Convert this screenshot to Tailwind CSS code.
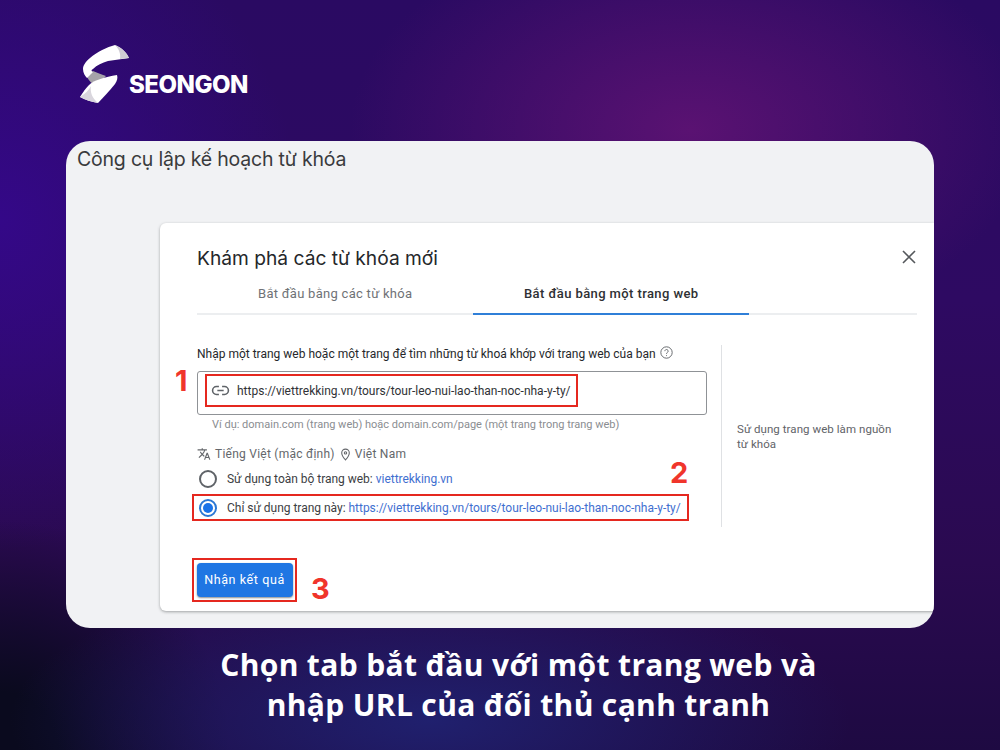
<!DOCTYPE html>
<html lang="vi">
<head>
  <meta charset="UTF-8">
  <title>Chọn tab bắt đầu với một trang web</title>
  <script src="https://cdn.jsdelivr.net/npm/@tailwindcss/browser@4"></script>
</head>
<body class="font-['Roboto',sans-serif]">
  <div class="relative w-[1000px] h-[750px] overflow-hidden flex flex-col bg-[radial-gradient(ellipse_340px_210px_at_690px_130px,#5a1272_0%,transparent_100%),radial-gradient(ellipse_420px_150px_at_430px_720px,#20206e_0%,transparent_100%),radial-gradient(ellipse_230px_230px_at_0px_750px,#0a0a1e_0%,#0a0a1e_25%,transparent_100%),radial-gradient(ellipse_300px_330px_at_0px_220px,#340888_0%,transparent_100%),linear-gradient(180deg,#2a0a62_0%,#2e0a62_40%,#2a0a50_75%,#1e0a42_100%)]">

    <!-- logo -->
    <div class="h-[141px] pl-[80px] pt-[45px] flex items-start shrink-0">
      <svg class="w-[50px] h-[60px] shrink-0" viewBox="80 45 50 60">
        <path d="M87 77 L93 71 C97 73 101 74 106 76 L96 86 C92 84 89 81 87 77Z" fill="#a5a2a9"/>
        <path d="M115 45 C107 47 97 52 90 58 C85 62 83 66 83 69 C83 73 85 76 87 78 L93 72 C91 71 91 70 93 69 C97 65 102 63 108 61 L129 58 C127 53 122 48 115 45Z" fill="#fff"/>
        <path d="M115 45 C122 48 127 53 129 58 L120 59 C121 54 119 49 115 45Z" fill="#cfccd4"/>
        <path d="M117 75 C118 78 117 81 115 84 C110 90 104 97 98 103 C92 102 85 100 80 97 C83 92 86 88 89 85 C94 80 105 77 117 75Z" fill="#fff"/>
        <path d="M98 103 C92 102 85 100 80 97 C85 94 89 90 91 86 C90 92 92 98 98 103Z" fill="#d9d6dd"/>
      </svg>
      <div class="mt-[25px] -ml-[1px] text-[24px] leading-[30px] font-extrabold text-white font-['Inter',sans-serif] tracking-[-0.5px]">SEONGON</div>
    </div>

    <!-- main card -->
    <div class="relative ml-[66px] w-[868px] h-[487px] shrink-0 rounded-[24px] bg-[#f1f2f4] overflow-hidden">
      <div class="pl-[11px] pt-[6px] text-[19.5px] leading-[25px] tracking-[-0.2px] text-[#3a3b3d] font-['Inter',sans-serif]">Công cụ lập kế hoạch từ khóa</div>

      <!-- dialog -->
      <div class="absolute left-[94px] top-[82px] w-[774px] h-[388px] bg-white rounded-l-[6px] shadow-[0_1px_3px_rgba(60,64,67,0.45)] pl-[37px] text-[#3c4043]">
        <div class="pt-[22px] flex items-center justify-between pr-[17px]">
          <div class="text-[19.2px] leading-[26px] text-[#25272a] font-['Inter',sans-serif]">Khám phá các từ khóa mới</div>
          <svg class="w-[16px] h-[16px] -mt-[3px]" viewBox="0 0 16 16" fill="none" stroke="#55585c" stroke-width="1.6"><path d="M2 2 L14 14 M14 2 L2 14"/></svg>
        </div>

        <!-- tabs -->
        <div class="mt-[10px] w-[720px] h-[34px] flex border-b-2 border-[#eceef0] text-[13px] leading-[18px]">
          <div class="w-[276px] pt-[4px] pl-[61px] text-[#6f7276] tracking-[0.28px]">Bắt đầu bằng các từ khóa</div>
          <div class="w-[276px] pt-[4px] pl-[51px] h-[34px] text-[#2e3033] font-medium tracking-[0.4px] border-b-2 border-[#2f7fd8]">Bắt đầu bằng một trang web</div>
        </div>

        <!-- form + side note -->
        <div class="mt-[30px] flex items-stretch">
          <div class="w-[525px] h-[182px] border-r border-[#dfe1e4] shrink-0">
            <div class="flex items-center h-[16px] pt-[1px] text-[12px] leading-[16px] whitespace-nowrap text-[#26282b]">
              Nhập một trang web hoặc một trang để tìm những từ khoá khớp với trang web của bạn
              <svg class="w-[13px] h-[13px] ml-[4px] -mt-[3px]" viewBox="0 0 24 24" fill="none" stroke="#66696d" stroke-width="1.8"><circle cx="12" cy="12" r="10.5"/><path d="M9 9.500a3 3 0 1 1 4.600 2.500c-1 .7-1.600 1.300-1.600 2.500"/><path d="M12 17v1.600"/></svg>
            </div>
            <div class="mt-[10px] w-[510px] h-[44px] border border-[#8f9296] rounded-[3px] p-[2px] pl-[7px]">
              <div class="w-[373px] h-[33px] border-2 border-[#e5281f] flex items-center pl-[4px] text-[12px] whitespace-nowrap text-[#303236]">
                <svg class="w-[19px] h-[19px] shrink-0 mr-[7px]" viewBox="0 0 24 24" fill="none" stroke="#5f6368" stroke-width="2"><path d="M10 7H7a5 5 0 0 0 0 10h3M14 7h3a5 5 0 0 1 0 10h-3M8 12h8"/></svg>
                https://viettrekking.vn/tours/tour-leo-nui-lao-than-noc-nha-y-ty/
              </div>
            </div>
            <div class="mt-[3px] pl-[15px] text-[11px] leading-[14px] whitespace-nowrap text-[#8a8d91]">Ví dụ: domain.com (trang web) hoặc domain.com/page (một trang trong trang web)</div>
            <div class="mt-[14px] flex items-center text-[12px] leading-[16px] tracking-[0.25px] text-[#64676b]">
              <svg class="w-[14px] h-[14px] mr-[4px]" viewBox="0 0 24 24" fill="#64676b"><path d="M12.900 15.100l-2.600-2.500c1.800-2 3-4.200 3.700-6.600H17V4h-7V2H8v2H1v2h11.200c-.7 1.900-1.700 3.700-3.200 5.300-.9-1-1.700-2.200-2.300-3.300h-2c.7 1.600 1.700 3.200 3 4.600l-5.100 5L4 19l5-5 3.100 3.100.8-2zM18.500 10h-2L12 22h2l1.100-3h4.800l1.100 3h2l-4.500-12zm-2.600 7l1.600-4.300 1.600 4.300h-3.200z"/></svg>
              <span>Tiếng Việt (mặc định)</span>
              <svg class="w-[13px] h-[13px] ml-[4px] mr-[3px]" viewBox="0 0 24 24" fill="none" stroke="#64676b" stroke-width="2"><path d="M12 2a7 7 0 0 0-7 7c0 5 7 13 7 13s7-8 7-13a7 7 0 0 0-7-7z"/><circle cx="12" cy="9" r="2.200"/></svg>
              <span>Việt Nam</span>
            </div>
            <div class="mt-[7px] ml-[2px] flex items-center h-[20px] text-[12px] whitespace-nowrap tracking-[-0.02px] text-[#3c4043]">
              <span class="w-[18px] h-[18px] rounded-full border-2 border-[#5f6368] mr-[10px] shrink-0"></span>
              Sử dụng toàn bộ trang web:&nbsp;<span class="text-[#3f6fd0]">viettrekking.vn</span>
            </div>
            <div class="mt-[5px] -ml-[5px] w-[497px] h-[27px] border-2 border-[#e5281f] flex items-center pl-[5px] text-[12px] whitespace-nowrap tracking-[-0.02px] text-[#3c4043]">
              <span class="w-[18px] h-[18px] rounded-full border-2 border-[#2b78d4] mr-[10px] shrink-0 flex items-center justify-center"><span class="w-[10px] h-[10px] rounded-full bg-[#1a73e8]"></span></span>
              Chỉ sử dụng trang này:&nbsp;<span class="text-[#3f6fd0]">https://viettrekking.vn/tours/tour-leo-nui-lao-than-noc-nha-y-ty/</span>
            </div>
          </div>
          <div class="pl-[15px] pt-[77px] w-[180px] text-[11.5px] leading-[15px] tracking-[0.06px] text-[#5f6368]">Sử dụng trang web làm nguồn từ khóa</div>
        </div>

        <!-- submit -->
        <div class="-ml-[5px] mt-[31px] w-[105px] h-[44px] border-2 border-[#e5281f] flex items-center justify-center">
          <div class="w-[96px] h-[34px] rounded-[4px] bg-[#1f76e3] shadow-[0_1px_2px_rgba(60,64,67,0.6)] text-white text-[12.5px] tracking-[0.6px] flex items-center justify-center">Nhận kết quả</div>
        </div>

        <!-- step numbers -->
        <div class="absolute left-[15px] top-[141px] text-[29px] leading-[34px] font-bold text-[#f0352b] font-['Inter',sans-serif]">1</div>
        <div class="absolute left-[510px] top-[233px] text-[29px] leading-[34px] font-bold text-[#f0352b] font-['Inter',sans-serif]">2</div>
        <div class="absolute left-[151px] top-[349px] text-[29px] leading-[34px] font-bold text-[#f0352b] font-['Inter',sans-serif]">3</div>
      </div>
    </div>

    <!-- caption -->
    <div class="mt-[17px] pl-[37px] text-center text-white text-[30px] leading-[40px] tracking-[0.35px] font-bold font-['Open_Sans',sans-serif]">
      Chọn tab bắt đầu với một trang web và<br>nhập URL của đối thủ cạnh tranh
    </div>
  </div>
</body>
</html>
